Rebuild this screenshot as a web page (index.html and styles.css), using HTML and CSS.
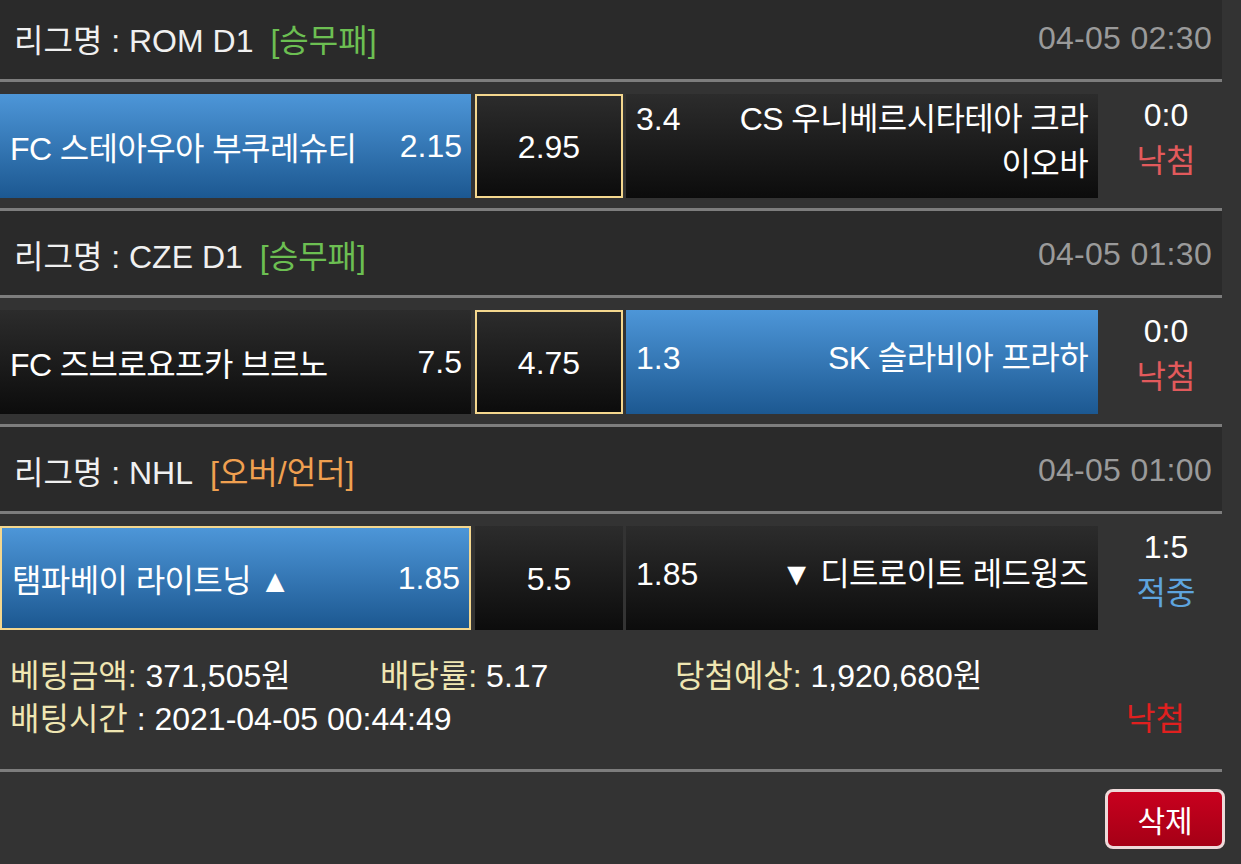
FILE: index.html
```html
<!DOCTYPE html>
<html lang="ko">
<head>
<meta charset="utf-8">
<title>배팅내역</title>
<link rel="stylesheet" href="styles.css">
</head>
<body>
<div class="slip">
  <div class="game">
    <div class="league">
      <span class="lname">리그명 : ROM D1</span>
      <span class="btype wdl">[승무패]</span>
      <span class="ltime">04-05 02:30</span>
    </div>
    <div class="match">
      <div class="cell home blue">
        <span class="team">FC 스테아우아 부쿠레슈티</span>
        <span class="odd">2.15</span>
      </div>
      <div class="cell draw dark picked">2.95</div>
      <div class="cell away dark">
        <div class="inner">
          <span class="odd">3.4</span>
          <span class="team">CS 우니베르시타테아 크라이오바</span>
        </div>
      </div>
      <div class="score">
        <span>0:0</span>
        <span class="res lose">낙첨</span>
      </div>
    </div>
  </div>

  <div class="game">
    <div class="league">
      <span class="lname">리그명 : CZE D1</span>
      <span class="btype wdl">[승무패]</span>
      <span class="ltime">04-05 01:30</span>
    </div>
    <div class="match">
      <div class="cell home dark">
        <span class="team">FC 즈브로요프카 브르노</span>
        <span class="odd">7.5</span>
      </div>
      <div class="cell draw dark picked">4.75</div>
      <div class="cell away blue">
        <div class="inner">
          <span class="odd">1.3</span>
          <span class="team">SK 슬라비아 프라하</span>
        </div>
      </div>
      <div class="score">
        <span>0:0</span>
        <span class="res lose">낙첨</span>
      </div>
    </div>
  </div>

  <div class="game">
    <div class="league">
      <span class="lname">리그명 : NHL</span>
      <span class="btype ou">[오버/언더]</span>
      <span class="ltime">04-05 01:00</span>
    </div>
    <div class="match last">
      <div class="cell home blue picked">
        <span class="team">탬파베이 라이트닝 ▲</span>
        <span class="odd">1.85</span>
      </div>
      <div class="cell draw dark">5.5</div>
      <div class="cell away dark">
        <div class="inner">
          <span class="odd">1.85</span>
          <span class="team">▼ 디트로이트 레드윙즈</span>
        </div>
      </div>
      <div class="score">
        <span>1:5</span>
        <span class="res win">적중</span>
      </div>
    </div>
  </div>

  <div class="summary">
    <div class="sum-row">
      <span class="item amount"><span class="lbl">베팅금액:</span> 371,505원</span>
      <span class="item rate"><span class="lbl">배당률:</span> 5.17</span>
      <span class="item expect"><span class="lbl">당첨예상:</span> 1,920,680원</span>
    </div>
    <div class="sum-row second">
      <span class="item"><span class="lbl">배팅시간</span> : 2021-04-05 00:44:49</span>
      <span class="total-res">낙첨</span>
    </div>
  </div>
</div>
<div class="actions">
  <button class="del" type="button">삭제</button>
</div>
</body>
</html>
```

FILE: styles.css
```css
html, body {
  margin: 0;
  padding: 0;
  background: #333333;
}

body {
  font-family: "Liberation Sans", "Noto Sans CJK KR", sans-serif;
  font-size: 32px;
  color: #ffffff;
  overflow: hidden;
}

.slip {
  width: 1222px;
  margin-top: -5px;
  border-bottom: 3px solid #7d7d7d;
}

.league {
  box-sizing: border-box;
  background: #2a2a2a;
  border-bottom: 3px solid #7d7d7d;
  height: 87px;
  display: flex;
  align-items: center;
  padding: 2px 10px 0 14px;
  color: #f0f0f0;
}

.btype {
  margin-left: 17px;
}

.btype.wdl {
  color: #6cbf52;
}

.btype.ou {
  color: #f0a050;
}

.ltime {
  margin-left: auto;
  color: #9a9a9a;
  letter-spacing: 0.3px;
}

.match {
  display: flex;
  padding: 12px 0 10px;
  border-bottom: 3px solid #7d7d7d;
}

.match.last {
  border-bottom: none;
}

.cell {
  height: 104px;
  box-sizing: border-box;
  display: flex;
  align-items: center;
}

.cell.blue {
  background: linear-gradient(#4d96d8, #1c5891);
}

.cell.dark {
  background: linear-gradient(#2c2c2c, #0c0c0c);
}

.cell.picked {
  border: 2px solid #f4d78e;
}

.team {
  letter-spacing: -0.6px;
}

.home {
  width: 471px;
  justify-content: space-between;
  padding: 0 9px 0 10px;
}

.draw {
  width: 148px;
  margin-left: 4px;
  justify-content: center;
  padding-top: 2px;
}

.away {
  width: 472px;
  margin-left: 3px;
  padding: 0 10px 8px 10px;
}

.away .inner {
  display: flex;
  align-items: flex-start;
  justify-content: space-between;
  width: 100%;
  line-height: 45px;
}

.away .team {
  text-align: right;
  margin-left: 40px;
}

.score {
  width: 124px;
  height: 104px;
  box-sizing: border-box;
  display: flex;
  flex-direction: column;
  align-items: center;
  justify-content: center;
  line-height: 46px;
  padding: 0 0 16px 12px;
}

.res.lose {
  color: #e25a5c;
}

.res.win {
  color: #5ea4de;
}

.summary {
  padding: 15px 0 28px 10px;
  line-height: 43px;
}

.sum-row {
  display: flex;
}

.amount {
  width: 370px;
}

.rate {
  width: 295px;
}

.sum-row.second {
  justify-content: space-between;
  padding-right: 37px;
}

.lbl {
  color: #efe6b2;
}

.total-res {
  color: #e0201f;
}

.actions {
  display: flex;
  justify-content: flex-end;
  padding: 17px 16px 0 0;
}

.del {
  width: 120px;
  height: 60px;
  border: 3px solid #eedada;
  border-radius: 8px;
  background: linear-gradient(#c8001e, #a50016);
  color: #ffffff;
  font-family: "Liberation Sans", "Noto Sans CJK KR", sans-serif;
  font-size: 30px;
  padding: 0;
}
```
